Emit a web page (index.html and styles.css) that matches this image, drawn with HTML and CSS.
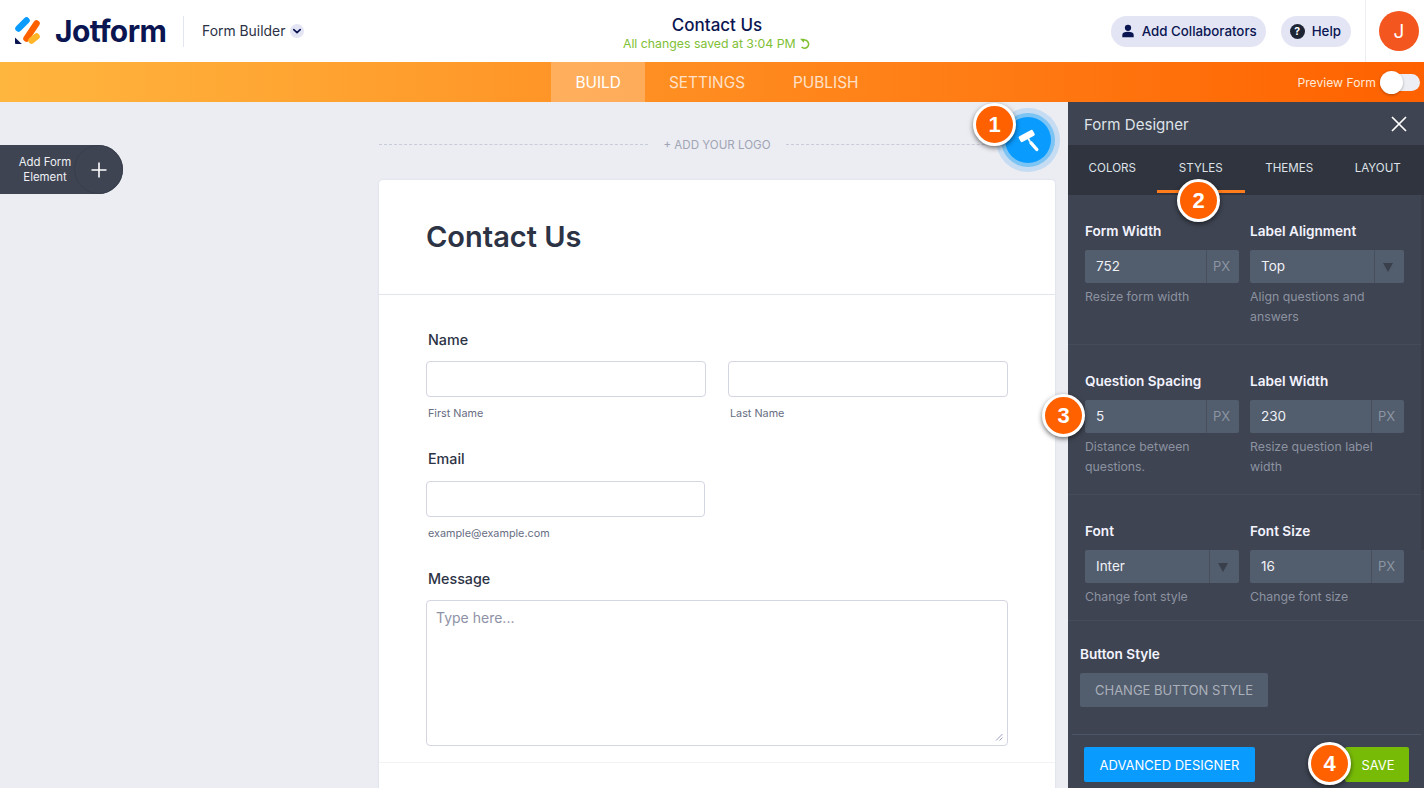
FILE: index.html
```html
<!DOCTYPE html>
<html lang="en">
<head>
    <meta charset="UTF-8">
    <meta name="viewport" content="width=device-width, initial-scale=1.0">
    <title>Contact Us - Form Builder</title>
    <link rel="stylesheet" href="styles.css">
</head>
<body>
    <header class="topbar">
        <div class="brand">
            <svg class="logo-mark" viewBox="0 0 28 28" width="28" height="28">
                <g fill="none" stroke-width="6.5" stroke-linecap="round">
                    <path d="M4.5 12.5 L12.5 4.5" stroke="#0a9bff"/>
                    <path d="M12.5 22.5 L22.5 7.5" stroke="#ff6100"/>
                    <path d="M17.5 24.5 L22.5 20.5" stroke="#ffb629"/>
                </g>
                <path d="M1 21.6 L7.8 28 H2 A1 1 0 0 1 1 27 Z" fill="#0a1551"/>
            </svg>
            <span class="logo-text">Jotform</span>
            <span class="brand-sep"></span>
            <span class="builder-name">Form Builder</span>
            <span class="builder-caret">
                <svg viewBox="0 0 14 14" width="14" height="14"><path d="M3.8 5.6 L7 8.6 L10.2 5.6" fill="none" stroke="#0a1551" stroke-width="1.7" stroke-linecap="round" stroke-linejoin="round"/></svg>
            </span>
        </div>
        <div class="form-status">
            <div class="form-name">Contact Us</div>
            <div class="saved-note">All changes saved at 3:04 PM
                <svg viewBox="0 0 12 12" width="12" height="12"><path d="M3 2.8 A4.1 4.1 0 1 1 2.6 9" fill="none" stroke="#80c034" stroke-width="1.7"/><path d="M1 0.8 H5 V4.8 Z" fill="#80c034"/></svg>
            </div>
        </div>
        <div class="top-actions">
            <button class="pill-btn">
                <svg viewBox="0 0 16 16" width="14" height="16"><circle cx="8" cy="4.4" r="3.6" fill="#0a1551"/><path d="M1.5 15 V12.4 C1.5 10 4 8.8 8 8.8 C12 8.8 14.5 10 14.5 12.4 V15 Z" fill="#0a1551"/></svg>
                Add Collaborators
            </button>
            <button class="pill-btn help-btn">
                <span class="help-icon">?</span>
                Help
            </button>
            <div class="avatar-cell"><span class="avatar">J</span></div>
        </div>
    </header>

    <nav class="tabbar">
        <div class="tabs">
            <a class="tab active">BUILD</a>
            <a class="tab">SETTINGS</a>
            <a class="tab">PUBLISH</a>
        </div>
        <div class="preview-toggle">
            <span>Preview Form</span>
            <span class="switch"><span class="knob"></span></span>
        </div>
    </nav>

    <div class="workspace">
        <main class="canvas">
            <button class="add-element">
                <span class="add-label">Add Form Element</span>
                <span class="add-plus">
                    <svg viewBox="0 0 16 16" width="16" height="16"><path d="M8 0.5 V15.5 M0.5 8 H15.5" stroke="#fff" stroke-width="1.6"/></svg>
                </span>
            </button>

            <div class="form-column">
                <div class="logo-slot">
                    <span class="logo-dash"></span>
                    <span class="logo-add">+ ADD YOUR LOGO</span>
                    <span class="logo-dash"></span>
                </div>

                <section class="form-card">
                    <div class="form-head"><h1>Contact Us</h1></div>
                    <div class="form-body">
                        <div class="field">
                            <label class="field-label">Name</label>
                            <div class="name-row">
                                <div>
                                    <div class="text-input"></div>
                                    <div class="sub-label">First Name</div>
                                </div>
                                <div>
                                    <div class="text-input"></div>
                                    <div class="sub-label">Last Name</div>
                                </div>
                            </div>
                        </div>
                        <div class="field">
                            <label class="field-label">Email</label>
                            <div class="text-input email-input"></div>
                            <div class="sub-label">example@example.com</div>
                        </div>
                        <div class="field">
                            <label class="field-label">Message</label>
                            <div class="text-area">
                                <span>Type here...</span>
                                <svg class="grip" viewBox="0 0 8 8" width="8" height="8"><path d="M1 7.5 L7.5 1 M4.5 7.5 L7.5 4.5" stroke="#9a9cc0" stroke-width="1"/></svg>
                            </div>
                        </div>
                    </div>
                    <div class="form-foot"></div>
                </section>
            </div>

            <button class="designer-fab">
                <svg viewBox="0 0 24 24" width="24" height="24">
                    <rect x="-8" y="-3.2" width="16" height="6.4" rx="1.4" fill="#fff" transform="translate(10.7 8) rotate(-28)"/>
                    <path d="M12.3 10.5 L14 13.5" stroke="#fff" stroke-width="1.8"/>
                    <path d="M15 14.8 L20.8 21.5" stroke="#fff" stroke-width="3.4" stroke-linecap="round"/>
                </svg>
            </button>
        </main>

        <aside class="designer">
            <div class="designer-title">
                <span class="title-text">Form Designer</span>
                <svg viewBox="0 0 16 16" width="16" height="16"><path d="M1 1 L15 15 M15 1 L1 15" stroke="#fff" stroke-width="1.7"/></svg>
            </div>
            <div class="designer-tabs">
                <span class="d-tab">COLORS</span>
                <span class="d-tab selected">STYLES</span>
                <span class="d-tab">THEMES</span>
                <span class="d-tab">LAYOUT</span>
            </div>
            <div class="designer-body">
                <div class="opt-row">
                    <div class="opt">
                        <div class="opt-label">Form Width</div>
                        <div class="opt-input"><span class="val">752</span><span class="unit">PX</span></div>
                        <div class="opt-help">Resize form width</div>
                    </div>
                    <div class="opt">
                        <div class="opt-label">Label Alignment</div>
                        <div class="opt-input"><span class="val">Top</span><span class="unit arrow"><i></i></span></div>
                        <div class="opt-help">Align questions and answers</div>
                    </div>
                </div>
                <div class="opt-row">
                    <div class="opt">
                        <div class="opt-label">Question Spacing</div>
                        <div class="opt-input"><span class="val">5</span><span class="unit">PX</span></div>
                        <div class="opt-help">Distance between questions.</div>
                    </div>
                    <div class="opt">
                        <div class="opt-label">Label Width</div>
                        <div class="opt-input"><span class="val">230</span><span class="unit">PX</span></div>
                        <div class="opt-help">Resize question label width</div>
                    </div>
                </div>
                <div class="opt-row font-row">
                    <div class="opt">
                        <div class="opt-label">Font</div>
                        <div class="opt-input"><span class="val">Inter</span><span class="unit arrow"><i></i></span></div>
                        <div class="opt-help">Change font style</div>
                    </div>
                    <div class="opt">
                        <div class="opt-label">Font Size</div>
                        <div class="opt-input"><span class="val">16</span><span class="unit">PX</span></div>
                        <div class="opt-help">Change font size</div>
                    </div>
                </div>
                <div class="button-style">
                    <div class="opt-label">Button Style</div>
                    <button class="change-style">CHANGE BUTTON STYLE</button>
                </div>
            </div>
            <div class="designer-foot">
                <button class="advanced">ADVANCED DESIGNER</button>
                <button class="save">SAVE</button>
            </div>
        </aside>

        <span class="callout callout-1">1</span>
        <span class="callout callout-2">2</span>
        <span class="callout callout-3">3</span>
        <span class="callout callout-4">4</span>
    </div>
</body>
</html>
```

FILE: styles.css
```css
* {
    box-sizing: border-box;
}

body {
    margin: 0;
    height: 788px;
    overflow: hidden;
    font-family: Inter, "Liberation Sans", sans-serif;
    color: #0a1551;
    background: #ebedf3;
    display: flex;
    flex-direction: column;
}

button {
    font-family: inherit;
    border: none;
    cursor: pointer;
}

/* top bar */
.topbar {
    height: 62px;
    background: #fff;
    display: grid;
    grid-template-columns: 1fr auto 1fr;
    align-items: center;
    flex-shrink: 0;
}

.brand {
    display: flex;
    align-items: center;
    padding-left: 14px;
}

.logo-mark {
    margin-right: 13px;
    margin-top: -2px;
}

.logo-text {
    font-size: 30px;
    font-weight: 700;
    letter-spacing: -0.6px;
    line-height: 1;
    width: 128px;
}

.brand-sep {
    width: 1px;
    height: 31px;
    background: #e3e5ef;
    margin-right: 18px;
}

.builder-name {
    font-size: 13.9px;
    color: #2b3245;
}

.builder-caret {
    width: 14px;
    height: 14px;
    border-radius: 50%;
    background: #e3e5f5;
    margin-left: 5px;
    display: flex;
}

.form-status {
    text-align: center;
    padding-left: 10px;
}

.form-name {
    font-size: 17px;
    font-weight: 500;
    line-height: 22px;
    margin-top: 3px;
}

.saved-note {
    font-size: 12.3px;
    color: #80c034;
    line-height: 16px;
}

.saved-note svg {
    vertical-align: -2px;
}

.top-actions {
    display: flex;
    justify-content: flex-end;
    align-items: center;
    height: 100%;
}

.pill-btn {
    height: 31px;
    padding: 0 9px 0 10px;
    border-radius: 16px;
    background: #e3e5f5;
    color: #0a1551;
    font-size: 13.3px;
    font-weight: 500;
    display: flex;
    align-items: center;
    gap: 7px;
    margin-right: 15px;
}

.help-btn {
    padding: 0 10px 0 9px;
    margin-right: 14px;
}

.help-icon {
    width: 15px;
    height: 15px;
    border-radius: 50%;
    background: #1d2433;
    color: #fff;
    font-size: 10.5px;
    font-weight: 700;
    display: flex;
    align-items: center;
    justify-content: center;
}

.avatar-cell {
    height: 100%;
    border-left: 1px solid #eceef4;
    padding: 0 5px 0 13px;
    display: flex;
    align-items: center;
}

.avatar {
    width: 40px;
    height: 40px;
    border-radius: 50%;
    background: #f4561f;
    color: #fff;
    font-size: 19px;
    display: flex;
    align-items: center;
    justify-content: center;
}

/* orange tabs */
.tabbar {
    height: 40px;
    flex-shrink: 0;
    background: linear-gradient(90deg, #ffb63f 0%, #ff6100 100%);
    display: flex;
    justify-content: center;
    position: relative;
}

.tabs {
    display: flex;
    height: 100%;
    margin-left: 10px;
}

.tab {
    color: #ffe0c8;
    font-size: 15.4px;
    height: 40px;
    line-height: 41px;
    padding: 0 24px;
}

.tab.active {
    background: rgba(255, 255, 255, 0.25);
    color: #fff;
}

.preview-toggle {
    position: absolute;
    right: 4px;
    top: 0;
    height: 100%;
    display: flex;
    align-items: center;
    gap: 4px;
    color: #ffe9d9;
    font-size: 12.2px;
}

.switch {
    width: 40px;
    height: 17px;
    border-radius: 9px;
    background: #eceef4;
    position: relative;
}

.knob {
    position: absolute;
    left: 0;
    top: -3px;
    width: 23px;
    height: 23px;
    border-radius: 50%;
    background: #fff;
    box-shadow: 0 1px 3px rgba(0, 0, 0, 0.3);
}

/* canvas */
.workspace {
    flex: 1;
    display: flex;
    position: relative;
    min-height: 0;
}

.canvas {
    width: 1068px;
    background: #ebedf3;
    position: relative;
    overflow: hidden;
    padding-left: 379px;
}

.add-element {
    position: absolute;
    left: 0;
    top: 43px;
    width: 123px;
    height: 49px;
    background: #3e4452;
    border-radius: 0 25px 25px 0;
    color: #eef0f5;
    display: flex;
    align-items: center;
    padding: 0;
}

.add-label {
    font-size: 11.4px;
    line-height: 14.5px;
    width: 74px;
    margin-left: 8px;
    text-align: center;
}

.add-plus {
    width: 49px;
    height: 49px;
    margin-left: -8px;
    border-radius: 50%;
    border: 1px solid #383e4b;
    display: flex;
    align-items: center;
    justify-content: center;
}

.form-column {
    width: 676px;
}

.logo-slot {
    height: 78px;
    display: flex;
    align-items: center;
    gap: 15px;
    padding-top: 7px;
}

.logo-dash {
    flex: 1;
    border-top: 1px dashed #c8cbd8;
}

.logo-add {
    font-size: 11.6px;
    color: #a0a4b4;
}

.form-card {
    background: #fff;
    border-radius: 4px 4px 0 0;
    box-shadow: 0 0 2px rgba(80, 90, 130, 0.15);
}

.form-head {
    height: 115px;
    padding: 39px 47px 0;
    border-bottom: 1px solid #e3e5ec;
}

.form-head h1 {
    margin: 0;
    font-size: 29px;
    font-weight: 600;
    line-height: 36px;
    color: #2c3345;
}

.form-body {
    padding: 0 47px;
}

.field {
    padding-top: 34.5px;
    height: 119.5px;
}

.field-label {
    display: block;
    font-size: 14.3px;
    font-weight: 450;
    color: #2c3345;
    line-height: 20px;
    padding-left: 2px;
    margin-bottom: 11.5px;
}

.name-row {
    display: grid;
    grid-template-columns: 1fr 1fr;
    gap: 22px;
}

.text-input {
    height: 36px;
    background: #fff;
    border: 1px solid #d3d6e2;
    border-radius: 4px;
}

.email-input {
    width: 279px;
}

.sub-label {
    font-size: 10.8px;
    color: #666d82;
    margin-top: 10px;
    padding-left: 2px;
    line-height: 14px;
}

.text-area {
    height: 146px;
    border: 1px solid #d3d6e2;
    border-radius: 4px;
    padding: 8px 9px;
    font-size: 14px;
    color: #8d92a6;
    position: relative;
}

.grip {
    position: absolute;
    right: 4px;
    bottom: 4px;
}

.form-foot {
    margin-top: 108px;
    border-top: 1px solid #f3f3f7;
    height: 60px;
}

.designer-fab {
    position: absolute;
    left: 1005px;
    top: 15px;
    width: 46px;
    height: 46px;
    border-radius: 50%;
    background: #0a9bff;
    box-shadow: 0 0 0 4px #7cc4f4, 0 0 0 9px rgba(125, 190, 240, 0.35);
    display: flex;
    align-items: center;
    justify-content: center;
    padding: 0;
}

/* designer panel */
.designer {
    width: 356px;
    background: #3e4452;
    display: flex;
    flex-direction: column;
    color: #fff;
}

.designer-title {
    height: 43px;
    flex-shrink: 0;
    padding: 0 17px 0 16px;
    display: flex;
    align-items: center;
    justify-content: space-between;
    font-size: 15.1px;
    color: #dfe2e8;
}

.title-text {
    padding-top: 2px;
}

.designer-tabs {
    height: 50px;
    flex-shrink: 0;
    background: #2f343e;
    display: grid;
    grid-template-columns: repeat(4, 88.5px);
}

.d-tab {
    font-size: 11.6px;
    color: #dfe2e8;
    text-align: center;
    line-height: 46px;
}

.d-tab.selected {
    border-bottom: 3px solid #ff7b1c;
    height: 48px;
}

.designer-body {
    flex: 1;
    min-height: 0;
    position: relative;
}

/* scrollbar strip */
.designer-body::after {
    content: "";
    position: absolute;
    right: 0;
    top: 0;
    width: 3px;
    height: 355px;
    background: #383d49;
}

.opt-row {
    display: grid;
    grid-template-columns: 154px 154px;
    gap: 11px;
    height: 150px;
    padding: 27px 0 0 17px;
    border-bottom: 1px solid #454b59;
}

.font-row {
    height: 126px;
}

.opt-label {
    font-size: 13.6px;
    font-weight: 600;
    color: #f3f3fe;
    line-height: 18px;
    margin-bottom: 10px;
}

.opt-input {
    height: 33px;
    display: flex;
    background: #525d6d;
    border-radius: 2px;
    font-size: 13.5px;
    color: #f0f1f5;
    line-height: 33px;
    overflow: hidden;
}

.val {
    flex: 1;
    padding-left: 11px;
}

.unit {
    width: 33px;
    border-left: 1px solid #474f5c;
    color: #8c95a3;
    text-align: center;
    font-size: 13px;
    padding-right: 3px;
}

.arrow {
    display: flex;
    align-items: center;
    justify-content: center;
    width: 30px;
}

.arrow i {
    width: 0;
    height: 0;
    border-left: 5.5px solid transparent;
    border-right: 5.5px solid transparent;
    border-top: 9px solid #39404c;
    margin-top: 1px;
}

.opt-help {
    font-size: 12.3px;
    line-height: 20px;
    color: #8c92a0;
    margin-top: 4px;
}

.button-style {
    margin-left: 12px;
    padding-top: 24px;
}

.change-style {
    width: 188px;
    height: 34px;
    background: #525d6d;
    color: #aab0ba;
    font-size: 13px;
    border-radius: 2px;
}

.designer-foot {
    height: 54px;
    margin: 0 3px 0 4px;
    border-top: 1px solid #4d5666;
    display: flex;
    justify-content: space-between;
    padding: 12px 12px 0 12px;
    flex-shrink: 0;
}

.advanced {
    width: 171px;
    height: 35px;
    background: #0a9bff;
    color: #fff;
    font-size: 13px;
    border-radius: 2px;
}

.save {
    width: 64px;
    height: 35px;
    background: #78bb07;
    color: #fff;
    font-size: 13px;
    padding-left: 8px;
    border-radius: 2px;
}

/* numbered callouts */
.callout {
    position: absolute;
    width: 43px;
    height: 43px;
    border-radius: 50%;
    background: #ff6100;
    border: 3px solid #fff;
    box-shadow: 0 2px 5px rgba(0, 0, 0, 0.55);
    color: #fff;
    font-family: "Liberation Sans", sans-serif;
    font-weight: 700;
    font-size: 22px;
    display: flex;
    align-items: center;
    justify-content: center;
}

.callout-1 { left: 973px; top: 1px; }
.callout-2 { left: 1177px; top: 77px; }
.callout-3 { left: 1042px; top: 292px; }
.callout-4 { left: 1308px; top: 640px; }
```
